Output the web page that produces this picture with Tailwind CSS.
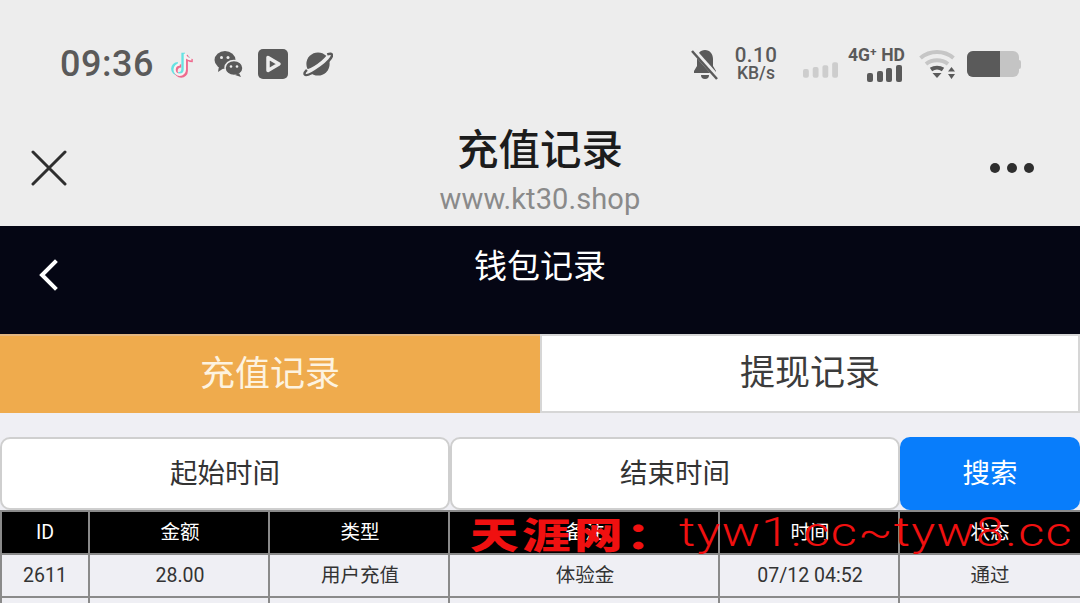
<!DOCTYPE html>
<html lang="zh">
<head>
    <meta charset="UTF-8">
    <meta name="viewport" content="width=device-width, initial-scale=1.0">
    <title>充值记录</title>
    <script src="https://cdn.jsdelivr.net/npm/@tailwindcss/browser@4"></script>
</head>
<body class="h-[603px] overflow-hidden bg-[#efeff4] font-['Roboto','Noto_Sans_CJK_SC',sans-serif]">
    <div class="relative h-[603px] overflow-hidden">
        <!-- Status bar -->
        <div class="h-[124px] bg-[#ededed] flex items-start justify-between pl-[60px] pr-[60px] pt-[43px]">
            <div class="flex items-center h-[42px]">
                <span class="text-[36px] leading-none font-medium tracking-[0.5px] text-[#5a5a5a] w-[94px]">09:36</span>
                <svg class="ml-[15px] w-[28px] h-[30px]" viewBox="0 0 30 30" fill="none" stroke-width="3.500">
                    <path d="M17 4v17a5.500 5.500 0 1 1-5.500-5.500M17 4c1 4 4 6 7 6" stroke="#66e3e3" transform="translate(-2 -1)"/>
                    <path d="M17 4v17a5.500 5.500 0 1 1-5.500-5.500M17 4c1 4 4 6 7 6" stroke="#ee6a8e" transform="translate(1.500 1.500)"/>
                    <path d="M17 4v17a5.500 5.500 0 1 1-5.500-5.500M17 4c1 4 4 6 7 6" stroke="#f6f2f2" stroke-width="2.500"/>
                </svg>
                <svg class="ml-[17px] w-[30px] h-[30px]" viewBox="0 0 30 30" fill="#5a5a5a">
                    <ellipse cx="11" cy="11" rx="10.500" ry="9"/>
                    <path d="M5 17l-1 6 6-4z"/>
                    <ellipse cx="20" cy="19" rx="9" ry="7.500" stroke="#ededed" stroke-width="1.500"/>
                    <path d="M25 24l2 4-6-2z"/>
                    <circle cx="7.500" cy="8.500" r="1.500" fill="#ededed"/>
                    <circle cx="14" cy="8.500" r="1.500" fill="#ededed"/>
                    <circle cx="17" cy="17.500" r="1.300" fill="#ededed"/>
                    <circle cx="23" cy="17.500" r="1.300" fill="#ededed"/>
                </svg>
                <svg class="ml-[14px] w-[30px] h-[30px]" viewBox="0 0 30 30">
                    <rect width="30" height="30" rx="5" fill="#5a5a5a"/>
                    <path d="M10 8.500v13l11-6.500z" fill="none" stroke="#ededed" stroke-width="3.500" stroke-linejoin="round"/>
                </svg>
                <svg class="ml-[15px] w-[30px] h-[30px]" viewBox="0 0 31 30">
                    <circle cx="15.500" cy="15" r="12" fill="#5a5a5a"/>
                    <path d="M3 23C9 23 24 13 28 5" fill="none" stroke="#ededed" stroke-width="5"/>
                    <path d="M25 5c3-1 5-1 5 1 0 2-4 7-11 12S4 28 2 26c-1-1 0-3 2-5" fill="none" stroke="#5a5a5a" stroke-width="2.500"/>
                </svg>
            </div>
            <div class="flex items-center h-[42px] text-[#5a5a5a]">
                <svg class="w-[28px] h-[32px]" viewBox="0 0 28 32" fill="#5a5a5a">
                    <path d="M14 2c-5 0-8 4-8 9v7l-3 5v2h22v-2l-3-5v-7c0-5-3-9-8-9z"/>
                    <path d="M10 27a4 4 0 0 0 8 0z"/>
                    <path d="M2 2l25 28" stroke="#ededed" stroke-width="5"/>
                    <path d="M1 3l25 28" stroke="#5a5a5a" stroke-width="2.500"/>
                </svg>
                <div class="ml-[16px] w-[42px] mt-[-2px] flex flex-col items-center font-medium">
                    <span class="text-[20.500px] leading-[20px] tracking-[0.5px] whitespace-nowrap">0.10</span>
                    <span class="text-[17.500px] leading-[17px] whitespace-nowrap">KB/s</span>
                </div>
                <svg class="ml-[26px] mt-[12px] w-[35px] h-[18px]" viewBox="0 0 36 18" fill="#cdcdcd">
                    <rect x="0" y="8" width="6" height="9" rx="2"/>
                    <rect x="10" y="6" width="6" height="11" rx="2"/>
                    <rect x="20" y="4" width="6" height="13" rx="2"/>
                    <rect x="30" y="1" width="6" height="16" rx="2"/>
                </svg>
                <div class="ml-[6px] w-[58px] flex flex-col items-end font-medium">
                    <span class="text-[17.500px] leading-[17px] font-bold whitespace-nowrap mr-[-3px]">4G⁺ HD</span>
                    <svg class="mt-[1px] w-[35px] h-[17px]" viewBox="0 0 35 17" fill="#5a5a5a">
                        <rect x="0" y="8" width="6" height="9" rx="2"/>
                        <rect x="10" y="6" width="6" height="11" rx="2"/>
                        <rect x="19" y="3" width="6" height="14" rx="2"/>
                        <rect x="29" y="0" width="6" height="17" rx="2"/>
                    </svg>
                </div>
                <svg class="ml-[17px] mt-[2px] w-[37px] h-[32px]" viewBox="0 0 37 32" fill="none" stroke-width="4">
                    <path d="M1.500 9C11 1 25 1 34.500 9" stroke="#c6c6c6"/>
                    <path d="M7 15c6.500-5 15.500-5 22 0" stroke="#c6c6c6"/>
                    <path d="M12 20.500c3.500-2.500 8.500-2.500 12 0" stroke="#5a5a5a"/>
                    <path d="M13.500 24h9l-4.500 5z" fill="#5a5a5a" stroke="none"/>
                    <path d="M29 22.500h7l-3.500-4.500zM29 25h7l-3.500 5z" fill="#5a5a5a" stroke="none"/>
                </svg>
                <div class="ml-[11px] mr-[-1px] flex items-center">
                    <div class="w-[52px] h-[26px] rounded-[6px] bg-[#c4c4c4] overflow-hidden">
                        <div class="w-[33px] h-full bg-[#5a5a5a]"></div>
                    </div>
                    <div class="w-[2px] h-[9px] rounded-r-sm bg-[#c4c4c4]"></div>
                </div>
            </div>
        </div>

        <!-- Title bar -->
        <div class="h-[102px] bg-[#ededed] relative flex flex-col items-center">
            <h1 class="text-[41.500px] leading-[52px] font-medium text-[#1c1c1c] mt-[1px]">充值记录</h1>
            <p class="text-[29px] leading-[36px] tracking-[0.1px] text-[#8a8a8a] mt-[4px] font-normal">www.kt30.shop</p>
            <svg class="absolute left-[31px] top-[26px] w-[36px] h-[36px]" viewBox="0 0 36 36" fill="none" stroke="#2e2e2e" stroke-width="3" stroke-linecap="round">
                <path d="M2 2l32 32M34 2L2 34"/>
            </svg>
            <div class="absolute left-[990px] top-[39px] flex gap-[7px]">
                <span class="w-[10px] h-[10px] rounded-full bg-[#2e2e2e]"></span>
                <span class="w-[10px] h-[10px] rounded-full bg-[#2e2e2e]"></span>
                <span class="w-[10px] h-[10px] rounded-full bg-[#2e2e2e]"></span>
            </div>
        </div>

        <!-- Page nav -->
        <div class="h-[108px] bg-[#050614] relative flex justify-center pt-[18px]">
            <span class="text-[33px] leading-[46px] text-white">钱包记录</span>
            <svg class="absolute left-[38px] top-[33px] w-[22px] h-[32px]" viewBox="0 0 22 32" fill="none" stroke="#fff" stroke-width="4" stroke-linecap="square">
                <path d="M17 3L4 16l13 13"/>
            </svg>
        </div>

        <!-- Tabs -->
        <div class="grid grid-cols-2 h-[79px] text-[35px]">
            <div class="bg-[#efab4d] border-t-2 border-[#e3b680] text-[#fdf3e0] pt-[2px] flex items-center justify-center">充值记录</div>
            <div class="bg-white border-2 border-t-2 border-[#d6d6d6] text-[#3c3c3c] pt-[2px] flex items-center justify-center">提现记录</div>
        </div>

        <!-- Search -->
        <div class="flex mt-[24px] h-[73px] text-[27.500px]">
            <div class="w-[450px] bg-white border-2 border-[#cfcfcf] rounded-[10px] text-[#333] flex items-center justify-center">起始时间</div>
            <div class="w-[450px] bg-white border-2 border-[#cfcfcf] rounded-[10px] text-[#333] flex items-center justify-center">结束时间</div>
            <div class="w-[180px] bg-[#087dfb] rounded-[10px] text-white flex items-center justify-center">搜索</div>
        </div>

        <!-- Table -->
        <div class="border-t-2 border-[#8a8a8a] text-[19.500px]">
            <div class="grid grid-cols-[88px_180px_180px_270px_180px_182px] h-[43px] bg-black text-white border-b-2 border-[#8a8a8a]">
                <div class="border-l-2 border-[#8a8a8a] flex items-center justify-center">ID</div>
                <div class="border-l-2 border-[#8a8a8a] pl-[2px] flex items-center justify-center">金额</div>
                <div class="border-l-2 border-[#8a8a8a] pl-[2px] flex items-center justify-center">类型</div>
                <div class="border-l-2 border-[#8a8a8a] pl-[2px] flex items-center justify-center">备注</div>
                <div class="border-l-2 border-[#8a8a8a] pl-[2px] flex items-center justify-center">时间</div>
                <div class="border-l-2 border-[#8a8a8a] flex items-center justify-center">状态</div>
            </div>
            <div class="grid grid-cols-[88px_180px_180px_270px_180px_182px] h-[43px] text-[#333] border-b-2 border-[#8a8a8a]">
                <div class="border-l-2 border-[#8a8a8a] flex items-center justify-center">2611</div>
                <div class="border-l-2 border-[#8a8a8a] pl-[2px] flex items-center justify-center">28.00</div>
                <div class="border-l-2 border-[#8a8a8a] pl-[2px] flex items-center justify-center">用户充值</div>
                <div class="border-l-2 border-[#8a8a8a] pl-[2px] flex items-center justify-center">体验金</div>
                <div class="border-l-2 border-[#8a8a8a] pl-[2px] flex items-center justify-center">07/12 04:52</div>
                <div class="border-l-2 border-[#8a8a8a] flex items-center justify-center">通过</div>
            </div>
            <div class="grid grid-cols-[88px_180px_180px_270px_180px_182px] h-[43px]">
                <div class="border-l-2 border-[#8a8a8a]"></div>
                <div class="border-l-2 border-[#8a8a8a]"></div>
                <div class="border-l-2 border-[#8a8a8a]"></div>
                <div class="border-l-2 border-[#8a8a8a]"></div>
                <div class="border-l-2 border-[#8a8a8a]"></div>
                <div class="border-l-2 border-[#8a8a8a]"></div>
            </div>
        </div>

        <!-- Watermark over the table header -->
        <div class="absolute left-[470px] top-[508px] h-[50px] flex items-center text-[#f01010] whitespace-nowrap">
            <span class="w-[209px] text-[36px] font-black tracking-[2.500px] scale-x-[1.35] origin-left font-['Noto_Sans_CJK_SC',sans-serif]">天涯网：</span>
            <span class="text-[40px] font-light tracking-[1px] scale-x-[1.26] origin-left font-['Roboto',sans-serif]">tyw1.cc~tyw8.cc</span>
        </div>
    </div>
</body>
</html>
